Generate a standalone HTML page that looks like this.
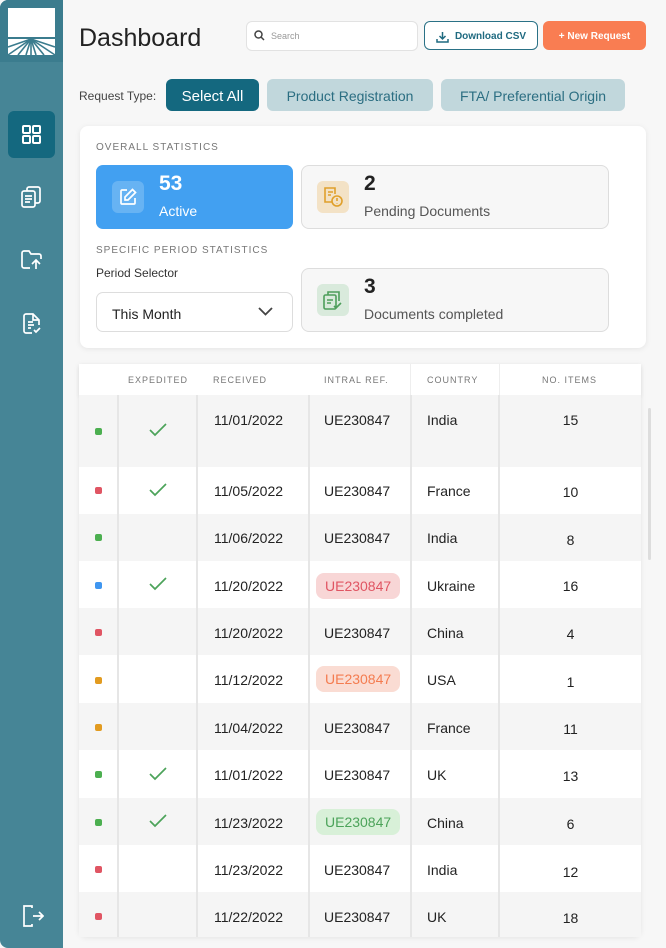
<!DOCTYPE html>
<html><head><meta charset="utf-8"><style>
*{margin:0;padding:0;box-sizing:border-box}
body{width:666px;height:948px;background:#f7f7f7;font-family:"Liberation Sans",sans-serif;position:relative;overflow:hidden;color:#222}
.a{position:absolute}
.side{left:0;top:0;width:63px;height:948px;background:#468596;border-radius:8px 0 0 8px}
.logo{left:0;top:0;width:63px;height:62px;background:#3b7c8e;border-radius:8px 0 0 0}
.btn{border-radius:6px;font-size:14px;display:flex;align-items:center;justify-content:center}
.card{background:#fff;border-radius:8px;box-shadow:0 1px 6px rgba(0,0,0,.08)}
.stat{border:1px solid #ddd;background:#f7f7f7;border-radius:8px}
.num{font-size:21px;font-weight:bold}
.lbl{font-size:14px;color:#555}
.cap{font-size:10px;letter-spacing:1px;color:#777}
.ico{width:32px;height:32px;border-radius:6px}
.row{left:79px;width:562px;height:47px}
.t{font-size:14px;color:#222}
.dot{width:7px;height:7px;border-radius:2px}
.vl{width:2px;background:#e6e6e6;top:395px;height:542px}
.pill{border-radius:8px;padding:5px 9px;font-size:14px}
</style></head><body>
<div class="a side"></div>
<div class="a logo"></div>
<svg class="a" style="left:0;top:0" width="63" height="62" viewBox="0 0 63 62">
<rect x="8" y="8" width="47" height="29" fill="#fff"/>
<rect x="8" y="39" width="47" height="16" fill="#fff"/>
<g stroke="#3b7c8e" stroke-width="1.6">
<line x1="31" y1="39" x2="8" y2="47"/><line x1="31" y1="39" x2="8" y2="55"/><line x1="31" y1="39" x2="18" y2="55"/><line x1="31" y1="39" x2="26" y2="55"/><line x1="31" y1="39" x2="31" y2="55"/><line x1="31" y1="39" x2="36" y2="55"/><line x1="31" y1="39" x2="44" y2="55"/><line x1="31" y1="39" x2="55" y2="55"/><line x1="31" y1="39" x2="55" y2="47"/>
</g></svg>
<div class="a" style="left:8px;top:111px;width:47px;height:47px;background:#14687f;border-radius:6px"></div>
<svg class="a" style="left:22px;top:125px" width="19" height="19" fill="none" stroke="#fff" stroke-width="2"><rect x="1" y="1" width="7" height="7" rx="1"/><rect x="11" y="1" width="7" height="7" rx="1"/><rect x="1" y="11" width="7" height="7" rx="1"/><rect x="11" y="11" width="7" height="7" rx="1"/></svg>
<svg class="a" style="left:21px;top:186px" width="21" height="22" fill="none" stroke="#fff" stroke-width="1.7"><rect x="1" y="5" width="13" height="16" rx="2"/><path d="M6 5V3a2 2 0 0 1 2-2h9a2 2 0 0 1 2 2v12a2 2 0 0 1-2 2h-3M4 10h7M4 13h7M4 16h5"/></svg>
<svg class="a" style="left:21px;top:250px" width="22" height="20" fill="none" stroke="#fff" stroke-width="1.7"><path d="M9 18H3a2 2 0 0 1-2-2V3a2 2 0 0 1 2-2h5l2 3h8a2 2 0 0 1 2 2v3M15 19v-8M11 14l4-4 4 4"/></svg>
<svg class="a" style="left:23px;top:313px" width="19" height="21" fill="none" stroke="#fff" stroke-width="1.7"><path d="M9 20H3a2 2 0 0 1-2-2V3a2 2 0 0 1 2-2h7l6 6v5M10 1v6h6M5 9h5M5 12h6M5 15h3M11 17l2 2 4-4"/></svg>
<svg class="a" style="left:22px;top:905px" width="22" height="22" fill="none" stroke="#fff" stroke-width="1.7"><path d="M8 1H2v20h6M8 1h2v2M8 21h2v-2M11 11h10M17 7l4 4-4 4"/></svg>

<div class="a" style="left:79px;top:24px;font-size:25px;color:#222">Dashboard</div>
<div class="a" style="left:246px;top:21px;width:172px;height:30px;background:#fff;border:1px solid #e2e2e2;border-radius:6px"></div>
<svg class="a" style="left:254px;top:30px" width="11" height="11" fill="none" stroke="#444" stroke-width="1.5"><circle cx="4.5" cy="4.5" r="3.5"/><path d="M7 7l3 3"/></svg>
<div class="a" style="left:271px;top:31px;font-size:9px;color:#999">Search</div>
<div class="a btn" style="left:424px;top:21px;width:114px;height:29px;border:1.5px solid #2a7186;background:#fff;color:#1f6a80;font-size:10px;font-weight:bold;gap:6px;padding-top:2px">
<svg width="13" height="12" fill="none" stroke="#1f6a80" stroke-width="1.5"><path d="M6.5 1v7M3.5 5l3 3 3-3M1 8v3h11V8"/></svg>Download CSV</div>
<div class="a btn" style="left:543px;top:21px;width:103px;height:29px;background:#f97d52;color:#fff;font-size:10px;font-weight:bold;padding-top:2px">+ New Request</div>

<div class="a" style="left:79px;top:89px;font-size:12px;color:#444">Request Type:</div>
<div class="a btn" style="left:166px;top:79px;width:93px;height:32px;background:#14687f;color:#fff;font-size:15px;padding-top:2px">Select All</div>
<div class="a btn" style="left:267px;top:79px;width:166px;height:32px;background:#c1d7dc;color:#2b6e82;padding-top:2px">Product Registration</div>
<div class="a btn" style="left:441px;top:79px;width:184px;height:32px;background:#c1d7dc;color:#2b6e82;padding-top:2px">FTA/ Preferential Origin</div>

<div class="a card" style="left:80px;top:126px;width:566px;height:222px"></div>
<div class="a cap" style="left:96px;top:142px">OVERALL STATISTICS</div>
<div class="a" style="left:96px;top:165px;width:197px;height:64px;background:#42a0f1;border-radius:7px"></div>
<div class="a ico" style="left:112px;top:181px;background:rgba(255,255,255,.2)"></div>
<svg class="a" style="left:119px;top:188px" width="18" height="18" fill="none" stroke="#fff" stroke-width="1.7"><path d="M8 2H3a1 1 0 0 0-1 1v12a1 1 0 0 0 1 1h12a1 1 0 0 0 1-1v-5M13.5 1.5l3 3L9 12H6V9z"/></svg>
<div class="a num" style="left:159px;top:172px;color:#fff">53</div>
<div class="a lbl" style="left:159px;top:203px;color:#fff">Active</div>
<div class="a stat" style="left:301px;top:165px;width:308px;height:64px"></div>
<div class="a ico" style="left:317px;top:181px;background:#f3e2c6"></div>
<svg class="a" style="left:323px;top:186px" width="22" height="22" fill="none" stroke="#e0a02b" stroke-width="1.6"><path d="M9 16H2V2h10v6M5 6h5M5 9h3"/><circle cx="14" cy="15" r="5"/><path d="M14 12v3M14 17v.5"/></svg>
<div class="a num" style="left:364px;top:172px">2</div>
<div class="a lbl" style="left:364px;top:203px">Pending Documents</div>

<div class="a cap" style="left:96px;top:245px">SPECIFIC PERIOD STATISTICS</div>
<div class="a" style="left:96px;top:266px;font-size:12px;color:#333">Period Selector</div>
<div class="a" style="left:96px;top:292px;width:197px;height:40px;background:#fff;border:1px solid #ddd;border-radius:7px"></div>
<div class="a" style="left:112px;top:306px;font-size:14px">This Month</div>
<svg class="a" style="left:258px;top:307px" width="15" height="9" fill="none" stroke="#444" stroke-width="1.8"><path d="M1 1l6.5 6.5L14 1"/></svg>
<div class="a stat" style="left:301px;top:268px;width:308px;height:64px"></div>
<div class="a ico" style="left:317px;top:284px;background:#d9eadc"></div>
<svg class="a" style="left:323px;top:289px" width="21" height="22" fill="none" stroke="#4d9e5b" stroke-width="1.6"><rect x="1" y="6" width="12" height="14" rx="1.5"/><path d="M5 6V3h11v9M4 11h6M4 14h4M11 17l2 2 5-5"/></svg>
<div class="a num" style="left:364px;top:275px">3</div>
<div class="a lbl" style="left:364px;top:306px">Documents completed</div>

<div class="a card" style="left:79px;top:364px;width:562px;height:573px;border-radius:0 0 8px 8px;overflow:hidden"></div>
<div class="a" style="left:79px;top:364px;width:562px;height:31px;background:#fff;box-shadow:0 2px 4px rgba(0,0,0,.06)"></div>
<div class="a cap" style="left:128px;top:375px;font-size:9px">EXPEDITED</div>
<div class="a cap" style="left:213px;top:375px;font-size:9px">RECEIVED</div>
<div class="a cap" style="left:324px;top:375px;font-size:9px">INTRAL REF.</div>
<div class="a cap" style="left:427px;top:375px;font-size:9px">COUNTRY</div>
<div class="a cap" style="left:542px;top:375px;font-size:9px">NO. ITEMS</div>
<div class="a" style="left:410px;top:364px;width:1px;height:31px;background:#eee"></div>
<div class="a" style="left:499px;top:364px;width:1px;height:31px;background:#eee"></div>

<div class="a row" style="top:395px;height:72px;background:#f5f5f5"></div>
<div class="a row" style="top:514px;background:#f5f5f5"></div>
<div class="a row" style="top:608px;background:#f5f5f5"></div>
<div class="a row" style="top:703px;background:#f5f5f5"></div>
<div class="a row" style="top:798px;background:#f5f5f5"></div>
<div class="a row" style="top:892px;height:45px;background:#f5f5f5"></div>
<div class="a vl" style="left:117px"></div>
<div class="a vl" style="left:196px"></div>
<div class="a vl" style="left:308px"></div>
<div class="a vl" style="left:410px"></div>
<div class="a vl" style="left:498px"></div>
<div class="a" style="left:648px;top:408px;width:3px;height:152px;background:#ddd;border-radius:2px"></div>

<div class="a dot" style="left:95px;top:428px;background:#4caf50"></div>
<div class="a dot" style="left:95px;top:487px;background:#e05563"></div>
<div class="a dot" style="left:95px;top:534px;background:#4caf50"></div>
<div class="a dot" style="left:95px;top:582px;background:#3f96f0"></div>
<div class="a dot" style="left:95px;top:629px;background:#e05563"></div>
<div class="a dot" style="left:95px;top:677px;background:#e29b20"></div>
<div class="a dot" style="left:95px;top:724px;background:#e29b20"></div>
<div class="a dot" style="left:95px;top:771px;background:#4caf50"></div>
<div class="a dot" style="left:95px;top:819px;background:#4caf50"></div>
<div class="a dot" style="left:95px;top:866px;background:#e05563"></div>
<div class="a dot" style="left:95px;top:913px;background:#e05563"></div>

<svg class="a" style="left:149px;top:423px" width="18" height="14" fill="none" stroke="#4ca35a" stroke-width="1.7"><path d="M1 7l5 5L17 1"/></svg>
<svg class="a" style="left:149px;top:483px" width="18" height="14" fill="none" stroke="#4ca35a" stroke-width="1.7"><path d="M1 7l5 5L17 1"/></svg>
<svg class="a" style="left:149px;top:577px" width="18" height="14" fill="none" stroke="#4ca35a" stroke-width="1.7"><path d="M1 7l5 5L17 1"/></svg>
<svg class="a" style="left:149px;top:767px" width="18" height="14" fill="none" stroke="#4ca35a" stroke-width="1.7"><path d="M1 7l5 5L17 1"/></svg>
<svg class="a" style="left:149px;top:814px" width="18" height="14" fill="none" stroke="#4ca35a" stroke-width="1.7"><path d="M1 7l5 5L17 1"/></svg>

<div class="a t" style="left:214px;top:412px">11/01/2022</div><div class="a t" style="left:324px;top:412px">UE230847</div><div class="a t" style="left:427px;top:412px">India</div><div class="a t" style="left:499px;width:143px;text-align:center;top:412px">15</div>
<div class="a t" style="left:214px;top:483px">11/05/2022</div><div class="a t" style="left:324px;top:483px">UE230847</div><div class="a t" style="left:427px;top:483px">France</div><div class="a t" style="left:499px;width:143px;text-align:center;top:484px">10</div>
<div class="a t" style="left:214px;top:530px">11/06/2022</div><div class="a t" style="left:324px;top:530px">UE230847</div><div class="a t" style="left:427px;top:530px">India</div><div class="a t" style="left:499px;width:143px;text-align:center;top:532px">8</div>
<div class="a t" style="left:214px;top:578px">11/20/2022</div><div class="a pill" style="left:316px;top:573px;background:#f8d6d6;color:#e05563">UE230847</div><div class="a t" style="left:427px;top:578px">Ukraine</div><div class="a t" style="left:499px;width:143px;text-align:center;top:578px">16</div>
<div class="a t" style="left:214px;top:625px">11/20/2022</div><div class="a t" style="left:324px;top:625px">UE230847</div><div class="a t" style="left:427px;top:625px">China</div><div class="a t" style="left:499px;width:143px;text-align:center;top:626px">4</div>
<div class="a t" style="left:214px;top:672px">11/12/2022</div><div class="a pill" style="left:316px;top:666px;background:#fadcd3;color:#f47c50">UE230847</div><div class="a t" style="left:427px;top:672px">USA</div><div class="a t" style="left:499px;width:143px;text-align:center;top:674px">1</div>
<div class="a t" style="left:214px;top:720px">11/04/2022</div><div class="a t" style="left:324px;top:720px">UE230847</div><div class="a t" style="left:427px;top:720px">France</div><div class="a t" style="left:499px;width:143px;text-align:center;top:721px">11</div>
<div class="a t" style="left:214px;top:767px">11/01/2022</div><div class="a t" style="left:324px;top:767px">UE230847</div><div class="a t" style="left:427px;top:767px">UK</div><div class="a t" style="left:499px;width:143px;text-align:center;top:768px">13</div>
<div class="a t" style="left:214px;top:815px">11/23/2022</div><div class="a pill" style="left:316px;top:809px;background:#d8f0d8;color:#4ca35a">UE230847</div><div class="a t" style="left:427px;top:815px">China</div><div class="a t" style="left:499px;width:143px;text-align:center;top:816px">6</div>
<div class="a t" style="left:214px;top:862px">11/23/2022</div><div class="a t" style="left:324px;top:862px">UE230847</div><div class="a t" style="left:427px;top:862px">India</div><div class="a t" style="left:499px;width:143px;text-align:center;top:864px">12</div>
<div class="a t" style="left:214px;top:909px">11/22/2022</div><div class="a t" style="left:324px;top:909px">UE230847</div><div class="a t" style="left:427px;top:909px">UK</div><div class="a t" style="left:499px;width:143px;text-align:center;top:910px">18</div>
</body></html>
